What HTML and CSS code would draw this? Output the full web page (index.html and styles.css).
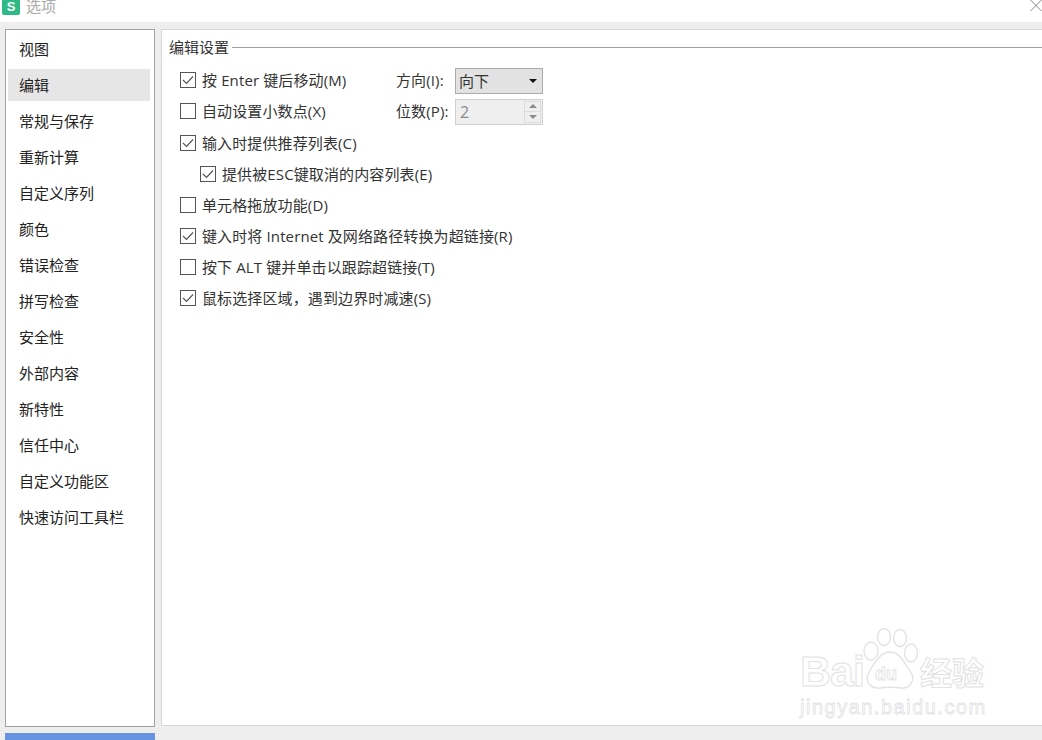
FILE: index.html
```
<!DOCTYPE html>
<html lang="zh">
<head>
<meta charset="utf-8">
<title>选项</title>
<link rel="stylesheet" href="styles.css">
</head>
<body>
<div class="window">
  <header class="titlebar">
    <span class="app-icon">S</span>
    <span class="title">选项</span>
    <svg class="close" width="12" height="12" viewBox="0 0 12 12"><path d="M0.5 0 L11.5 11 M11.5 0 L0.5 11" stroke="#8a8a8a" stroke-width="1" fill="none"/></svg>
  </header>
  <div class="content">
    <div class="left">
      <nav class="sidebar">
        <div class="nav-item">视图</div>
        <div class="nav-item active">编辑</div>
        <div class="nav-item">常规与保存</div>
        <div class="nav-item">重新计算</div>
        <div class="nav-item">自定义序列</div>
        <div class="nav-item">颜色</div>
        <div class="nav-item">错误检查</div>
        <div class="nav-item">拼写检查</div>
        <div class="nav-item">安全性</div>
        <div class="nav-item">外部内容</div>
        <div class="nav-item">新特性</div>
        <div class="nav-item">信任中心</div>
        <div class="nav-item">自定义功能区</div>
        <div class="nav-item">快速访问工具栏</div>
      </nav>
      <div class="blue-button"></div>
    </div>
    <main class="panel">
      <div class="group-head"><span>编辑设置</span><i class="rule"></i></div>
      <div class="row">
        <label class="check on"><b class="box"><svg width="12" height="10" viewBox="0 0 12 10"><path d="M1 5 L4.5 8.5 L11 1.5" stroke="#555" stroke-width="1.2" fill="none"/></svg></b>按 Enter 键后移动(M)</label>
        <span class="field-label">方向(I):</span>
        <span class="select">向下<i class="caret"></i></span>
      </div>
      <div class="row row-tall">
        <label class="check"><b class="box"></b>自动设置小数点(X)</label>
        <span class="field-label">位数(P):</span>
        <span class="spin">2<span class="spin-btns"><i class="up"></i><i class="down"></i></span></span>
      </div>
      <div class="row">
        <label class="check on"><b class="box"><svg width="12" height="10" viewBox="0 0 12 10"><path d="M1 5 L4.5 8.5 L11 1.5" stroke="#555" stroke-width="1.2" fill="none"/></svg></b>输入时提供推荐列表(C)</label>
      </div>
      <div class="row sub">
        <label class="check on"><b class="box"><svg width="12" height="10" viewBox="0 0 12 10"><path d="M1 5 L4.5 8.5 L11 1.5" stroke="#555" stroke-width="1.2" fill="none"/></svg></b>提供被ESC键取消的内容列表(E)</label>
      </div>
      <div class="row">
        <label class="check"><b class="box"></b>单元格拖放功能(D)</label>
      </div>
      <div class="row">
        <label class="check on"><b class="box"><svg width="12" height="10" viewBox="0 0 12 10"><path d="M1 5 L4.5 8.5 L11 1.5" stroke="#555" stroke-width="1.2" fill="none"/></svg></b>键入时将 Internet 及网络路径转换为超链接(R)</label>
      </div>
      <div class="row">
        <label class="check"><b class="box"></b>按下 ALT 键并单击以跟踪超链接(T)</label>
      </div>
      <div class="row">
        <label class="check on"><b class="box"><svg width="12" height="10" viewBox="0 0 12 10"><path d="M1 5 L4.5 8.5 L11 1.5" stroke="#555" stroke-width="1.2" fill="none"/></svg></b>鼠标选择区域，遇到边界时减速(S)</label>
      </div>
      <div class="watermark">
        <div class="wm-top">
          <span class="wm-bai">Bai</span>
          <svg class="wm-paw" width="56" height="62" viewBox="0 0 56 62">
            <g fill="none" stroke="#e2e2e2" stroke-width="1.3">
              <ellipse cx="8" cy="23" rx="7" ry="9"/>
              <ellipse cx="21" cy="9" rx="6.5" ry="8.5"/>
              <ellipse cx="37" cy="10" rx="6.5" ry="8.5"/>
              <ellipse cx="48" cy="25" rx="6.5" ry="9"/>
              <path d="M27 24 C37 24 41 35 47 43 C53 51 48 61 38 60 C31 59 24 59 17 60 C7 61 1 53 6 44 C11 36 17 24 27 24 Z"/>
            </g>
            <text class="wm-du" x="12" y="52">du</text>
          </svg>
          <span class="wm-cn">经验</span>
        </div>
        <div class="wm-url">jingyan.baidu.com</div>
      </div>
    </main>
  </div>
</div>
</body>
</html>
```
FILE: styles.css
```
* { box-sizing: border-box; }
html, body { margin: 0; padding: 0; }
body {
  width: 1042px;
  height: 740px;
  overflow: hidden;
  font-family: "Open Sans", "Noto Sans CJK SC", "Liberation Sans", sans-serif;
  font-size: 15px;
  color: #222;
  background: #eeeeee;
}
.window { display: flex; flex-direction: column; height: 740px; }
.titlebar {
  height: 22px;
  flex: none;
  background: #fff;
  display: flex;
  align-items: flex-start;
  padding-left: 2px;
  overflow: hidden;
}
.app-icon {
  width: 18px;
  height: 15px;
  background: #2fb985;
  border-radius: 0 0 2px 2px;
  color: #fff;
  font: bold 13px/14px "Liberation Sans", sans-serif;
  text-align: center;
}
.title {
  margin-left: 6px;
  color: #a9a9a9;
  font-size: 15px;
  line-height: 13px;
}
.close { margin-left: auto; margin-right: 0; }
.content { flex: 1; display: flex; padding: 7px 0 0 5px; gap: 6px; min-height: 0; }
.left { width: 150px; flex: none; display: flex; flex-direction: column; }
.sidebar {
  height: 698px;
  background: #fff;
  border: 1px solid #a0a0a0;
  padding: 1px 4px 0 2px;
}
.nav-item {
  height: 36px;
  line-height: 36px;
  padding-left: 11px;
  color: #222;
  white-space: nowrap;
}
.nav-item.active { background: #e6e6e6; height: 32px; line-height: 32px; margin: 2px 0; }
.blue-button { height: 7px; margin-top: 6px; background: #6595e2; }
.panel {
  position: relative;
  flex: 1;
  height: 697px;
  background: #fff;
  border-left: 1px solid #d6d6d6;
  border-top: 1px solid #d6d6d6;
  border-bottom: 1px solid #d6d6d6;
  padding: 6px 0 0 7px;
}
.group-head { display: flex; align-items: center; height: 20px; margin-bottom: 8px; color: #333; }
.group-head span { margin-right: 3px; }
.rule { flex: 1; height: 1px; background: #a0a0a0; margin-top: 2px; }
.row { display: flex; align-items: center; height: 31px; padding-left: 11px; white-space: nowrap; color: #333; letter-spacing: 0.12px; }
.row-tall { height: 32px; padding-bottom: 1px; }
.row.sub { padding-left: 31px; }
.check { display: flex; align-items: center; flex: none; width: 216px; }
.row .check:only-child { width: auto; }
.box {
  width: 16px;
  height: 16px;
  flex: none;
  border: 1px solid #555;
  margin-right: 6px;
  display: flex;
  align-items: center;
  justify-content: center;
  background: #fff;
}
.field-label { width: 59px; flex: none; }
.select {
  width: 88px;
  height: 26px;
  margin-top: 2px;
  background: #e2e2e2;
  border: 1px solid #ababab;
  display: flex;
  align-items: center;
  padding-left: 3px;
  position: relative;
}
.caret {
  position: absolute;
  right: 5px;
  top: 10px;
  border-left: 4px solid transparent;
  border-right: 4px solid transparent;
  border-top: 4px solid #111;
}
.spin {
  width: 88px;
  height: 26px;
  margin-top: 2px;
  background: #efefef;
  border: 1px solid #cfcfcf;
  display: flex;
  align-items: center;
  padding-left: 4px;
  color: #8a8a8a;
  font-size: 16px;
  justify-content: space-between;
}
.spin-btns { width: 17px; height: 22px; display: flex; flex-direction: column; margin-right: 1px; border: 1px solid #dcdcdc; }
.spin-btns i { flex: 1; display: flex; align-items: center; justify-content: center; }
.spin-btns .up::before {
  content: "";
  border-left: 4px solid transparent;
  border-right: 4px solid transparent;
  border-bottom: 4px solid #8c8c8c;
}
.spin-btns .down { border-top: 1px solid #dcdcdc; }
.spin-btns .down::before {
  content: "";
  border-left: 4px solid transparent;
  border-right: 4px solid transparent;
  border-top: 4px solid #8c8c8c;
}
.watermark {
  position: absolute;
  left: 638px;
  top: 598px;
  width: 200px;
  color: transparent;
}
.wm-top { display: flex; align-items: flex-end; height: 62px; }
.wm-bai {
  font: bold 43px/38px "Liberation Sans", sans-serif;
  -webkit-text-stroke: 1px #e2e2e2;
  width: 65px;
  flex: none;
  letter-spacing: -1px;
}
.wm-paw { flex: none; margin-left: -2px; }
.wm-du {
  font: bold 18px "Liberation Sans", sans-serif;
  fill: none;
  stroke: #e2e2e2;
  stroke-width: 0.8;
}
.wm-cn {
  font-family: "Noto Sans CJK SC", sans-serif;
  font-size: 32px;
  line-height: 38px;
  font-weight: 700;
  -webkit-text-stroke: 1px #e2e2e2;
  margin-left: 1px;
  white-space: nowrap;
}
.wm-url {
  font: 20px/24px "Liberation Sans", sans-serif;
  -webkit-text-stroke: 0.8px #e2e2e2;
  margin-top: 5px;
  letter-spacing: 1.5px;
  white-space: nowrap;
}
```
